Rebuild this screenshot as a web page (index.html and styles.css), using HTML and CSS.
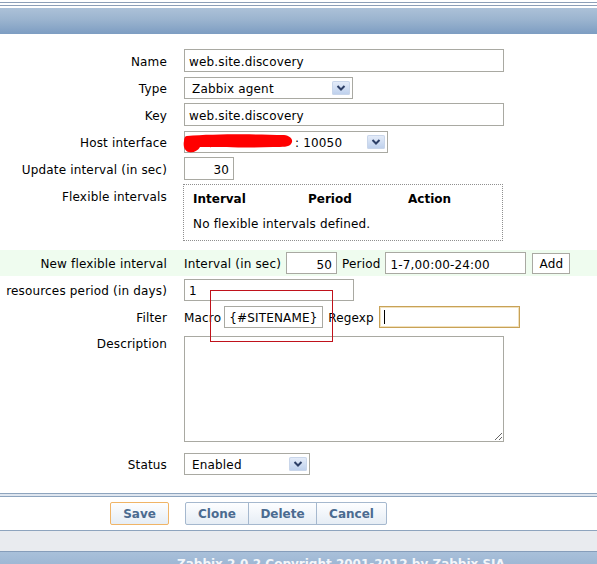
FILE: index.html
```html
<!DOCTYPE html>
<html>
<head>
<meta charset="utf-8">
<title>Discovery rule</title>
<link rel="stylesheet" href="styles.css">
</head>
<body>
<div class="top-gap"></div>
<div class="top-rule"></div>
<div class="header-bar"></div>

<div class="form">
  <div class="row">
    <div class="lbl">Name</div>
    <div class="field"><div class="inp w320">web.site.discovery</div></div>
  </div>
  <div class="row">
    <div class="lbl">Type</div>
    <div class="field"><div class="sel w169"><span class="txt">Zabbix agent</span><span class="arrow"><svg viewBox="0 0 18 14" width="18" height="14"><path d="M5.5 5 L9 8.5 L12.5 5" fill="none" stroke="#2d3f66" stroke-width="2"/></svg></span></div></div>
  </div>
  <div class="row">
    <div class="lbl">Key</div>
    <div class="field"><div class="inp w320">web.site.discovery</div></div>
  </div>
  <div class="row">
    <div class="lbl">Host interface</div>
    <div class="field"><div class="sel w204"><span class="host"><svg class="redact" viewBox="0 0 110 19" width="110" height="19"><path d="M4 2 C 30 0, 70 0, 101 1 C 108 2, 111 6, 108 10 C 106 13, 100 13, 90 13 C 60 14, 35 13, 17 13 C 15 17, 10 19, 6 18 C 1 17, 0 11, 1 7 C 1 4, 2 2, 4 2 Z" fill="#ff0000"/></svg><span class="txt">: 10050</span></span><span class="arrow"><svg viewBox="0 0 18 14" width="18" height="14"><path d="M5.5 5 L9 8.5 L12.5 5" fill="none" stroke="#2d3f66" stroke-width="2"/></svg></span></div></div>
  </div>
  <div class="row">
    <div class="lbl">Update interval (in sec)</div>
    <div class="field"><div class="inp w50 right">30</div></div>
  </div>
  <div class="row top">
    <div class="lbl">Flexible intervals</div>
    <div class="field">
      <div class="flexbox">
        <div class="fhead"><span>Interval</span><span>Period</span><span>Action</span></div>
        <div class="fempty">No flexible intervals defined.</div>
      </div>
    </div>
  </div>
  <div class="row green">
    <div class="lbl">New flexible interval</div>
    <div class="field gap">
      <span class="txt">Interval (in sec)</span>
      <div class="inp small w51 right">50</div>
      <span class="txt">Period</span>
      <div class="inp small w141">1-7,00:00-24:00</div>
      <div class="btn-add">Add</div>
    </div>
  </div>
  <div class="row">
    <div class="lbl">resources period (in days)</div>
    <div class="field"><div class="inp small w170">1</div></div>
  </div>
  <div class="row">
    <div class="lbl">Filter</div>
    <div class="field gap">
      <span class="txt">Macro</span>
      <div class="inp small w99 tight">{#SITENAME}</div>
      <span class="txt">Regexp</span>
      <div class="inp small w141 focus"><span class="caret"></span></div>
    </div>
  </div>
  <div class="row desc">
    <div class="lbl">Description</div>
    <div class="field"><textarea class="area"></textarea></div>
  </div>
  <div class="row">
    <div class="lbl">Status</div>
    <div class="field"><div class="sel w126"><span class="txt">Enabled</span><span class="arrow"><svg viewBox="0 0 18 14" width="18" height="14"><path d="M5.5 5 L9 8.5 L12.5 5" fill="none" stroke="#2d3f66" stroke-width="2"/></svg></span></div></div>
  </div>
</div>

<div class="sep"></div>
<div class="buttons">
  <div class="save-cell"><div class="btn save">Save</div></div>
  <div class="group">
    <div class="btn g-clone">Clone</div>
    <div class="btn g-delete">Delete</div>
    <div class="btn g-cancel">Cancel</div>
  </div>
</div>
<div class="strip"></div>
<div class="footer">Zabbix 2.0.2 Copyright 2001-2012 by Zabbix SIA</div>

<div class="annot"></div>
</body>
</html>
```

FILE: styles.css
```css
html, body {
  margin: 0;
  padding: 0;
  background: #ffffff;
}
body {
  font-family: "DejaVu Sans", Verdana, sans-serif;
  font-size: 12px;
  letter-spacing: 0.17px;
  color: #000000;
  overflow: hidden;
  height: 564px;
}
.top-gap {
  height: 2px;
}
.top-rule {
  height: 2px;
  border-top: 1px solid #8d9fb8;
  border-bottom: 1px solid #8d9fb8;
  background: #ffffff;
}
.header-bar {
  margin-top: 2px;
  height: 26px;
  background: linear-gradient(#acc1d8, #9bb4cf 45%, #7d9dc2);
}
.form {
  margin-top: 13px;
}
.row {
  display: flex;
  align-items: center;
  height: 27px;
}
.row.top {
  align-items: flex-start;
  height: 61px;
}
.row.top .lbl {
  padding-top: 8px;
}
.row.green {
  margin-top: 7px;
  height: 26px;
  background: #effcef;
}
.row.desc {
  align-items: flex-start;
  height: 120px;
}
.row.desc .lbl {
  padding-top: 7px;
}
.lbl {
  flex: none;
  box-sizing: content-box;
  width: 167px;
  padding-right: 17px;
  padding-top: 3px;
  text-align: right;
  white-space: nowrap;
  line-height: 15px;
}
.field {
  display: flex;
  align-items: center;
}
.field.gap > * + * {
  margin-left: 5px;
}
.field.gap > .tight {
  margin-left: 3px;
}
.txt {
  padding-top: 3px;
  line-height: 15px;
}
.inp {
  box-sizing: border-box;
  height: 23px;
  border: 1px solid #a9a9a2;
  background: #ffffff;
  padding: 3px 4px 0;
  display: flex;
  align-items: center;
  white-space: nowrap;
  overflow: hidden;
}
.inp.small {
  height: 22px;
}
.inp.right {
  justify-content: flex-end;
}
.inp.focus {
  border-color: #c8a257;
  box-shadow: inset 0 0 0 1px #f1e1bd;
  padding-top: 0;
}
.caret {
  display: block;
  width: 1px;
  height: 14px;
  background: #000000;
}
.w320 { width: 320px; }
.w50 { width: 50px; }
.w51 { width: 51px; }
.w141 { width: 141px; }
.w170 { width: 170px; }
.w99 { width: 99px; }
.w169 { width: 169px; }
.w204 { width: 204px; }
.w126 { width: 126px; }
.sel {
  box-sizing: border-box;
  height: 22px;
  border: 1px solid #a9a9a2;
  background: #ffffff;
  padding: 0 2px 0 7px;
  display: flex;
  align-items: center;
  justify-content: space-between;
  white-space: nowrap;
}
.arrow {
  display: block;
  width: 18px;
  height: 14px;
  border-radius: 2px;
  background: linear-gradient(#e7eefa, #bccfec);
  box-shadow: inset 0 0 0 1px #c9d6ea;
}
.arrow svg {
  display: block;
}
.host {
  display: flex;
  align-items: center;
}
.redact {
  display: block;
  margin-left: -9px;
  margin-top: 3px;
  margin-right: 2px;
}
.flexbox {
  box-sizing: border-box;
  margin-top: 2px;
  width: 320px;
  height: 57px;
  margin-left: -1px;
  border: 1px dotted #8f8f8f;
  padding: 7px 9px 0;
  line-height: 15px;
}
.fhead {
  display: grid;
  grid-template-columns: 115px 100px auto;
  font-weight: bold;
  letter-spacing: 0;
}
.fempty {
  margin-top: 10px;
}
.btn-add {
  box-sizing: border-box;
  width: 38px;
  height: 21px;
  margin-left: 6px !important;
  padding-top: 2px;
  border: 1px solid #a9a9a2;
  background: #ffffff;
  display: flex;
  align-items: center;
  justify-content: center;
}
.area {
  box-sizing: border-box;
  display: block;
  margin: 6px 0 0;
  width: 320px;
  height: 106px;
  border: 1px solid #a9a9a2;
  resize: both;
  font: inherit;
}
.sep {
  margin-top: 16px;
  height: 2px;
  border-top: 1px solid #8ea4be;
  border-bottom: 1px solid #8ea4be;
  background: #dfe6ef;
}
.buttons {
  display: flex;
  align-items: center;
  height: 33px;
}
.save-cell {
  box-sizing: border-box;
  width: 185px;
  padding-right: 16px;
  display: flex;
  justify-content: flex-end;
}
.btn {
  box-sizing: border-box;
  height: 23px;
  display: flex;
  align-items: center;
  justify-content: center;
  font-weight: bold;
  letter-spacing: 0;
  color: #4b6b90;
  background: linear-gradient(#fdfeff, #e6edf5);
  border: 1px solid #a5b8ce;
}
.btn.save {
  width: 59px;
  border-color: #f0b466;
  border-radius: 2px;
}
.group {
  display: flex;
}
.g-clone {
  width: 64px;
  border-radius: 2px 0 0 2px;
}
.g-delete {
  width: 69px;
  margin-left: -1px;
}
.g-cancel {
  width: 71px;
  margin-left: -1px;
  border-radius: 0 2px 2px 0;
}
.strip {
  height: 20px;
  border-top: 1px solid #8ea4be;
  background: #e9ebef;
}
.footer {
  border-top: 1px solid #869dba;
  height: 40px;
  padding: 5px 0 0 177px;
  box-sizing: border-box;
  background: linear-gradient(#a9c0da, #86a4c7);
  color: #f3f6fa;
  font-weight: bold;
  letter-spacing: 0;
  line-height: 15px;
  white-space: nowrap;
}
.annot {
  position: absolute;
  left: 210px;
  top: 290px;
  width: 121px;
  height: 50px;
  border: 1px solid #c0121b;
  pointer-events: none;
}
```
